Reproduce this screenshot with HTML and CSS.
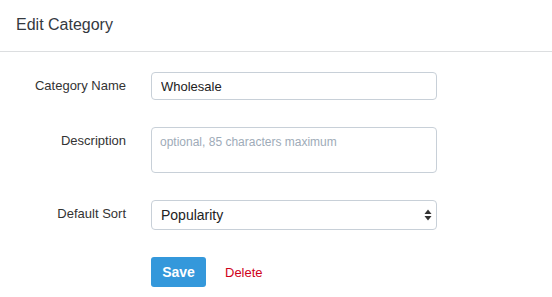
FILE: index.html
```html
<!DOCTYPE html>
<html lang="en">
<head>
  <meta charset="UTF-8" />
  <meta name="viewport" content="width=device-width, initial-scale=1.0"/>
  <title>Edit Category</title>
  <link rel="stylesheet" href="styles.css">
</head>
<body>
  <div class="panel-header">Edit Category</div>

  <form class="edit-form">
    <div class="form-row">
      <label class="form-label" for="name">Category Name</label>
      <input class="form-control" type="text" id="name" value="Wholesale" />
    </div>

    <div class="form-row">
      <label class="form-label" for="description">Description</label>
      <textarea class="form-control form-textarea" id="description" placeholder="optional, 85 characters maximum"></textarea>
    </div>

    <div class="form-row">
      <label class="form-label" for="sort">Default Sort</label>
      <div class="select-wrap">
        <select class="form-control form-select" id="sort">
          <option>Popularity</option>
          <option>Name</option>
          <option>Price</option>
        </select>
        <svg class="select-arrows" width="8" height="12" viewBox="0 0 8 12">
          <path d="M4 0.5 L7.5 5 L0.5 5 Z" fill="#333"/>
          <path d="M4 11.5 L7.5 7 L0.5 7 Z" fill="#333"/>
        </svg>
      </div>
    </div>

    <div class="form-row actions">
      <span class="form-label"></span>
      <button type="submit" class="btn-save">Save</button>
      <a href="#" class="btn-delete">Delete</a>
    </div>
  </form>
</body>
</html>
```

FILE: styles.css
```css
body {
  margin: 0;
  font-family: 'Liberation Sans', Arial, sans-serif;
  background-color: #fff;
  color: #333;
}

.panel-header {
  height: 52px;
  line-height: 49px;
  padding-left: 16px;
  font-size: 16px;
  color: #34393f;
  border-bottom: 1px solid #dcdee0;
  box-sizing: border-box;
}

.edit-form {
  padding-top: 20px;
  display: flex;
  flex-direction: column;
  gap: 27px;
}

.form-row {
  display: flex;
  align-items: flex-start;
  gap: 25px;
}

.form-label {
  width: 126px;
  flex-shrink: 0;
  text-align: right;
  font-size: 13px;
  line-height: 28px;
  color: #333;
}

.form-control {
  width: 286px;
  height: 28px;
  box-sizing: border-box;
  padding: 0 9px;
  border: 1px solid #c8d0d8;
  border-radius: 4px;
  font-family: 'Liberation Sans', Arial, sans-serif;
  font-size: 13px;
  color: #222;
  background: #fff;
  margin: 0;
}

.form-textarea {
  height: 46px;
  padding: 7px 8px;
  font-size: 12px;
  resize: none;
  display: block;
}

.form-textarea::placeholder {
  color: #9eabb8;
}

.select-wrap {
  position: relative;
}

.form-select {
  height: 30px;
  font-size: 14px;
  appearance: none;
  -webkit-appearance: none;
  display: block;
}

.select-arrows {
  position: absolute;
  right: 5px;
  top: 9px;
}

.actions {
  align-items: center;
  gap: 0;
}

.actions .form-label {
  margin-right: 25px;
}

.btn-save {
  width: 55px;
  height: 30px;
  border: none;
  border-radius: 3px;
  background-color: #3498db;
  color: #fff;
  font-family: 'Liberation Sans', Arial, sans-serif;
  font-weight: bold;
  font-size: 14px;
  cursor: pointer;
  padding: 0;
}

.btn-delete {
  margin-left: 19px;
  font-size: 13px;
  color: #d0021b;
  text-decoration: none;
}
```
